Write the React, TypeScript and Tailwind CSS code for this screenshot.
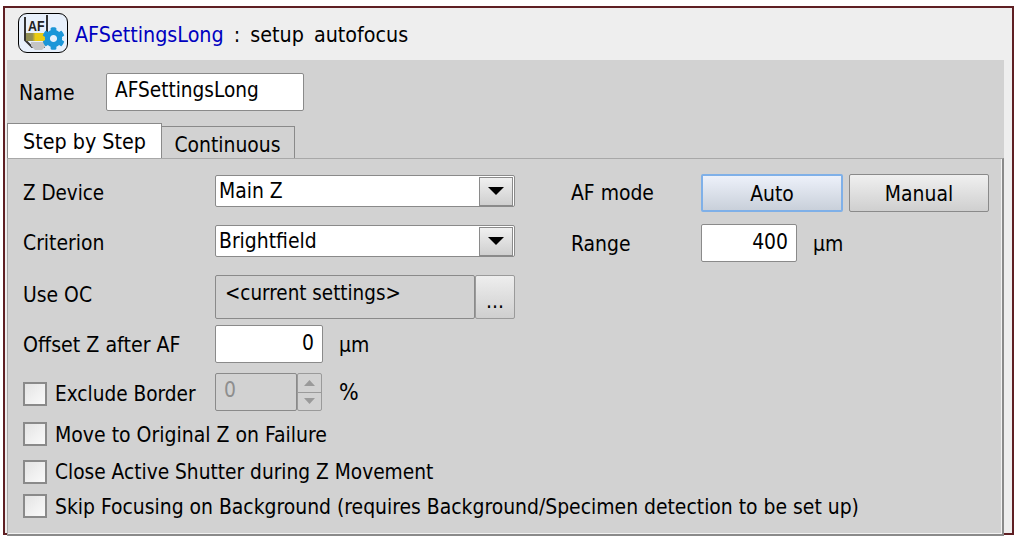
import React from 'react';
import { FaCog } from 'react-icons/fa';

const ComboBox: React.FC<{ value: string }> = ({ value }) => (
  <div className="flex h-8 w-[300px] items-center justify-between rounded-[2px] border border-[#8a8a8a] bg-white pl-[3px] pr-[1px]">
    <span className="mt-[1px]">{value}</span>
    <div className="flex h-[29px] w-[34px] items-center justify-center border border-[#8a8a8a] bg-gradient-to-b from-[#f0f0f0] to-[#cfcfcf]">
      <svg width="16" height="8" viewBox="0 0 16 8">
        <path d="M0 0H16L8 8Z" fill="#000" />
      </svg>
    </div>
  </div>
);

const NumberInput: React.FC<{ value: string; width: string }> = ({ value, width }) => (
  <div className={`flex h-[38px] items-center justify-end rounded-[2px] border border-[#8a8a8a] bg-white pr-[8px] ${width}`}>
    <span className="-mt-[2px]">{value}</span>
  </div>
);

const CheckBox: React.FC = () => (
  <div className="h-6 w-6 shrink-0 border-2 border-[#8a8a8a] bg-gradient-to-br from-[#e4e4e4] to-[#fafafa]" />
);

const App: React.FC = () => {
  return (
    <div className="h-[542px] w-[1018px] overflow-hidden bg-white pl-[3px] pt-[6px] font-['DejaVu_Sans_Condensed','Noto_Sans',sans-serif] text-[20.9px] leading-none text-black">
      <div className="h-[529px] w-[1011px] border-2 border-[#5f1f23] bg-[#eeeeee] pl-[2px]">
        <div className="flex h-[52px] items-center pb-[2px] pl-[11px]">
          <div className="relative h-10 w-[50px] overflow-hidden rounded-[9px] border border-black bg-[#e8f0fb]">
            <svg width="48" height="38" viewBox="0 0 48 38" className="absolute left-0 top-0">
              <path d="M6 3V26L13 33H26" fill="none" stroke="#333" strokeWidth="2" />
              <path d="M28 1V18" stroke="#333" strokeWidth="2" />
              <defs>
                <linearGradient id="afBar" x1="0" x2="1" y1="0" y2="0">
                  <stop offset="0" stopColor="#8f8d55" />
                  <stop offset="0.3" stopColor="#8f8d55" />
                  <stop offset="0.45" stopColor="#e9cb12" />
                  <stop offset="1" stopColor="#e9cb12" />
                </linearGradient>
              </defs>
              <rect x="7" y="19" width="21" height="8" fill="url(#afBar)" />
              <path d="M12 28H26V33L23 36H16L12 32Z" fill="#c4c4c4" />
              <text x="9" y="17" fontFamily="Liberation Sans" fontWeight="700" fontSize="15" fill="#222" textLength="16.5" lengthAdjust="spacingAndGlyphs">AF</text>
            </svg>
            <FaCog className="absolute left-[23px] top-[13px] text-[#1b96d8]" size={23} />
          </div>
          <span className="ml-[7px] mt-[3px] text-[21.3px] text-[#0000c0]">AFSettingsLong</span>
          <span className="ml-[10px] mt-[3px] text-[21.3px] [word-spacing:4px]">: setup autofocus</span>
        </div>
        <div className="h-[476px] w-[997px] bg-[#d2d2d2]">
          <div className="flex h-[64px] items-center pl-[12px] pt-[13px] pb-[13px]">
            <span className="mt-[2px] w-[87px]">Name</span>
            <div className="flex h-[38px] w-[198px] items-center rounded-[2px] border border-[#8a8a8a] bg-white pl-[8px]">
              <span className="-mt-[4px] text-[20.6px]">AFSettingsLong</span>
            </div>
          </div>
          <div className="flex h-[34px] items-end">
            <div className="z-10 flex h-[35px] w-[155px] items-center justify-center border border-b-0 border-[#8a8a8a] bg-white pt-[1px] text-[21.3px]">
              Step by Step
            </div>
            <div className="flex h-[32px] w-[133px] items-center justify-center border border-l-0 border-b-0 border-[#8a8a8a] bg-[#d2d2d2] pr-[1px] pt-[5px]">
              Continuous
            </div>
          </div>
          <div className="flex h-[378px] w-[997px] border border-[#a8a8a8] border-b-2 border-r-2 border-b-[#8a8a8a] border-r-[#8a8a8a] pl-[15px] pt-[16px] shadow-[inset_-1px_-1px_0_#f2f2f2]">
            <div className="flex w-[548px] flex-col">
              <div className="flex h-8 items-center">
                <span className="mt-[5px] w-[192px] text-[20.4px]">Z Device</span>
                <ComboBox value="Main Z" />
              </div>
              <div className="mt-[18px] flex h-8 items-center">
                <span className="mt-[4px] w-[192px]">Criterion</span>
                <ComboBox value="Brightfield" />
              </div>
              <div className="mt-[18px] flex h-[44px] items-center">
                <span className="-mt-[4px] w-[192px]">Use OC</span>
                <div className="h-[44px] w-[260px] rounded-[2px] border border-[#8a8a8a] bg-[#d2d2d2] pl-[9px] pt-[7px] text-[20.4px]">
                  &lt;current settings&gt;
                </div>
                <div className="flex h-[44px] w-[40px] items-center justify-center rounded-[2px] border border-[#9a9a9a] bg-gradient-to-b from-[#eeeeee] to-[#cfcfcf] pt-[8px]">
                  ...
                </div>
              </div>
              <div className="mt-[6px] flex h-[38px] items-center">
                <span className="mt-[2px] w-[192px] text-[21.2px]">Offset Z after AF</span>
                <NumberInput value="0" width="w-[108px]" />
                <span className="ml-[16px] mt-[2px]">µm</span>
              </div>
              <div className="mt-[10px] flex h-[38px] items-center">
                <div className="mt-[4px] flex w-[192px] items-center gap-2">
                  <CheckBox />
                  <span className="text-[20.6px]">Exclude Border</span>
                </div>
                <div className="flex h-[38px] w-[82px] items-center rounded-[2px] border border-[#8a8a8a] pl-[8px] text-[#8e8e8e]">
                  <span className="-mt-[4px]">0</span>
                </div>
                <div className="flex h-[38px] w-[25px] flex-col rounded-[2px] border border-[#9a9a9a]">
                  <div className="flex flex-1 items-center justify-center border-b border-[#9a9a9a]">
                    <svg width="11" height="6" viewBox="0 0 11 6"><path d="M0 6H11L5.5 0Z" fill="#9a9a9a" /></svg>
                  </div>
                  <div className="flex flex-1 items-center justify-center">
                    <svg width="11" height="6" viewBox="0 0 11 6"><path d="M0 0H11L5.5 6Z" fill="#9a9a9a" /></svg>
                  </div>
                </div>
                <span className="ml-[17px] text-[23px]">%</span>
              </div>
              <div className="mt-[11px] flex h-6 items-center gap-2">
                <CheckBox />
                <span className="mt-[2px] text-[21px]">Move to Original Z on Failure</span>
              </div>
              <div className="mt-[14px] flex h-6 items-center gap-2">
                <CheckBox />
                <span className="text-[20.7px]">Close Active Shutter during Z Movement</span>
              </div>
              <div className="mt-[10px] flex h-6 items-center gap-2 whitespace-nowrap">
                <CheckBox />
                <span className="mt-[2px]">Skip Focusing on Background (requires Background/Specimen detection to be set up)</span>
              </div>
            </div>
            <div className="flex flex-col">
              <div className="-mt-[1px] flex h-[38px] items-center">
                <span className="w-[130px]">AF mode</span>
                <div className="flex h-[38px] w-[142px] items-center justify-center rounded-[2px] border-2 border-[#7fb0e8] bg-gradient-to-b from-[#edf1fa] to-[#c9d0da] pt-[3px]">
                  Auto
                </div>
                <div className="ml-[6px] flex h-[38px] w-[140px] items-center justify-center rounded-[2px] border border-[#8a8a8a] bg-gradient-to-b from-[#f0f0f0] to-[#cfcfcf] pt-[3px]">
                  Manual
                </div>
              </div>
              <div className="mt-[12px] flex h-[38px] items-center">
                <span className="mt-[2px] w-[130px]">Range</span>
                <NumberInput value="400" width="w-[96px]" />
                <span className="ml-[16px] mt-[2px]">µm</span>
              </div>
            </div>
          </div>
        </div>
      </div>
    </div>
  );
};

export default App;
